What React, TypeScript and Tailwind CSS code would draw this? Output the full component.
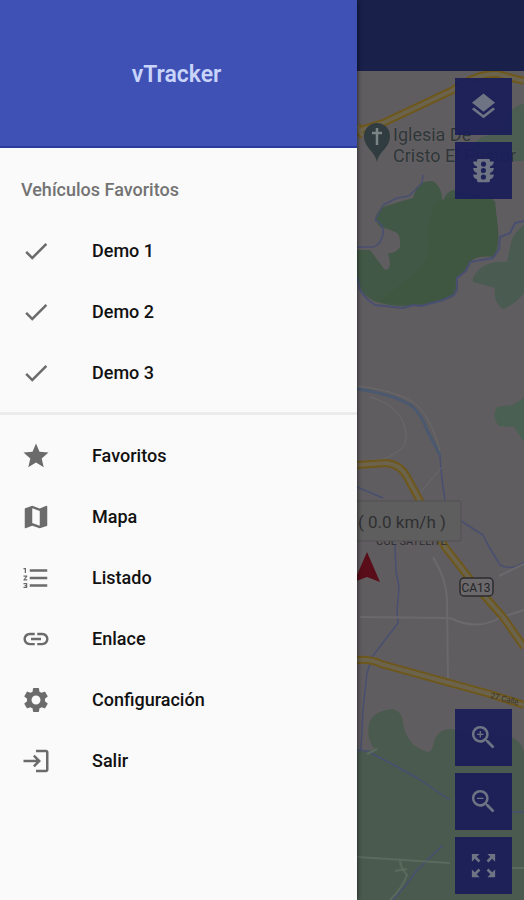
import type { IconType } from "react-icons";
import {
  MdCheck,
  MdFormatListNumbered,
  MdLayers,
  MdLink,
  MdLogin,
  MdMap,
  MdSettings,
  MdStar,
  MdTraffic,
  MdZoomIn,
  MdZoomOut,
  MdZoomOutMap,
} from "react-icons/md";

type Item = { label: string; icon: IconType };

const vehicles: Item[] = [
  { label: "Demo 1", icon: MdCheck },
  { label: "Demo 2", icon: MdCheck },
  { label: "Demo 3", icon: MdCheck },
];

const menu: Item[] = [
  { label: "Favoritos", icon: MdStar },
  { label: "Mapa", icon: MdMap },
  { label: "Listado", icon: MdFormatListNumbered },
  { label: "Enlace", icon: MdLink },
  { label: "Configuración", icon: MdSettings },
  { label: "Salir", icon: MdLogin },
];

const DrawerItem = ({ label, icon: Icon }: Item) => (
  <li>
    <a href="#" className="flex h-[61px] items-center gap-[41px] px-[21px] text-lg font-medium text-[#111111]">
      <Icon className="size-[30px] shrink-0 text-[#6b6b6b]" />
      <span>{label}</span>
    </a>
  </li>
);

const MapButton = ({ label, icon: Icon }: Item) => (
  <button
    type="button"
    aria-label={label}
    className="flex size-[57px] items-center justify-center bg-[#1a1f59]/95 text-[#6f7484]"
  >
    <Icon className="size-[31px]" />
  </button>
);

const Road = ({ d }: { d: string }) => (
  <>
    <path d={d} stroke="#6e571a" strokeWidth="8" />
    <path d={d} stroke="#6b634c" strokeWidth="4" />
  </>
);

const MapCanvas = () => (
  <svg
    viewBox="0 0 167 829"
    preserveAspectRatio="xMinYMin slice"
    className="absolute inset-0 h-full w-full bg-[#605d60]"
    fill="none"
    strokeLinejoin="round"
    fontFamily="Roboto, sans-serif"
  >
    {/* parks */}
    <path
      d="M18 149Q20 139 26 136L42 131L56 127Q60 112 68 111Q77 108 80 114Q86 120 85 131Q90 120 96 119L136 127L140 149L141 159Q143 178 136 186Q122 184 115 189Q110 200 100 207Q100 222 95 226Q80 234 60 234Q40 237 23 232Q8 228 3 216L0 205V179H13L28 199Q36 199 31 182Q38 183 43 176Q44 163 38 161Q30 157 23 156Z"
      fill="#425846"
    />
    <path d="M78 133Q100 120 138 130L141 160Q142 178 134 185Q116 184 110 194L98 207L94 226Q60 238 20 230Q45 214 62 200Q78 180 70 160Z" fill="#3f5640" />
    <path d="M167 33Q155 34 151 48Q146 62 125 66L112 76L130 90H167Z" fill="#4b5e51" />
    <path d="M167 154Q156 162 154 172L150 191Q135 190 125 196Q114 205 116 211L138 217Q136 232 146 238Q158 234 167 222Z" fill="#4a5c51" />
    <path d="M167 327L156 334L140 336Q134 345 142 355L157 356L167 371Z" fill="#496052" />
    <path
      d="M0 679H18Q9 668 12 654Q14 640 36 638Q46 641 46 652Q50 676 71 681Q76 680 77 670Q82 658 93 658L155 666Q165 672 167 680V829H0Z"
      fill="#4a5a4f"
    />

    {/* rivers */}
    <g stroke="#484f70" strokeWidth="1.5">
      <path d="M66 104L65 112L58 119L52 125L40 127L26 134L18 149Q27 152 26 163Q24 174 16 176L0 176" />
      <path d="M0 206L3 219L10 228L18 234L46 237L56 234L64 235L86 229L97 224L100 218V207L109 200L113 191L136 187L142 178L143 166L153 162L158 152L167 150" strokeWidth="2" />
      <path d="M0 318Q40 324 56 336Q65 345 70 359L83 384" stroke="#4a5870" strokeWidth="3" />
      <path d="M83 384Q84 405 88 429" />
      <path d="M0 416L26 427M104 450L126 464L131 474L143 494Q155 500 167 491" />
      <path d="M38 474L39 500L42 516L40 540L41 552L15 586L10 602L6 639L4 679" />
      <path d="M0 679L10 680L33 692L62 708L93 729M155 741H167" />
      <path d="M86 774L60 799L49 814L36 829" />
    </g>

    {/* streets */}
    <g stroke="#6b696c" strokeWidth="2">
      <path d="M0 315Q45 320 62 336Q76 352 83 380" strokeWidth="1" />
      <path d="M13 326Q42 334 48 357Q53 376 38 382Q28 390 16 389M63 422L85 396" strokeWidth="1" />
      <path d="M3 546L93 547Q120 560 142 547L167 539M142 505L167 493M76 486Q90 510 90 530L91 607" />
      <path d="M10 683L20 678M0 786L93 792M155 797H167M43 789Q43 796 50 804Q46 816 33 829M38 800L50 798" stroke="#5a6a5d" />
    </g>

    {/* highways */}
    <Road d="M0 54Q2 62 6 64M0 60L26 52L96 19Q120 2 140 3L167 10" />
    <Road d="M0 394L30 392Q44 394 50 406L88 476L116 512L146 546L167 576" />
    <Road d="M0 589Q14 588 24 593L93 612L133 623L167 634" />

    {/* church */}
    <path d="M20 91C18 80 7 77 7 65A13 13 0 0 1 33 65C33 77 22 80 20 91Z" fill="#303c3f" />
    <path d="M20 57V74M15 62H25" stroke="#7b8586" strokeWidth="2.5" />
    <g fill="#2f3638" stroke="#676568" strokeWidth="1" paintOrder="stroke" fontSize="18">
      <text x="36" y="70">Iglesia De</text>
      <text x="36" y="91">Cristo El Pastor</text>
    </g>

    <text x="19" y="474" fontSize="11" fill="#2c2c30">COL SATELITE</text>
    <rect x="103" y="507" width="33" height="18" rx="4" fill="#6b696c" stroke="#2b2b2d" strokeWidth="1.5" />
    <text x="119" y="521" fontSize="12" textAnchor="middle" fill="#252527">CA13</text>
    <text x="133" y="627" fontSize="8" fill="#39332a" transform="rotate(14 133 627)">27 Calle</text>

    {/* vehicle marker and its speed */}
    <path d="M10 481L23 511L10 506L-3 511Z" fill="#590d18" />
    <rect x="-60" y="430" width="164" height="40" rx="2" fill="#5e5e5e" stroke="#525153" />
    <text x="1" y="457" fontSize="17" fill="#303032">( 0.0 km/h )</text>
  </svg>
);

const App = () => {
  return (
    <div className="flex min-h-screen bg-[#605d60] font-[Roboto,sans-serif]">
      <aside className="z-10 w-[357px] max-w-[80%] shrink-0 bg-[#fafafa] shadow-[0_0_5px_rgba(0,0,0,0.7)]">
        <header className="flex h-[148px] items-center justify-center border-b-2 border-[#2a3c9e] bg-[#3f51b5] px-4 pt-1">
          <h1 className="pr-1 text-[23px] font-semibold text-[#c8d4fa]">vTracker</h1>
        </header>

        <nav>
          <h2 className="px-[21px] pt-7 pb-4 text-lg font-medium text-[#737373]">Vehículos Favoritos</h2>
          <ul>
            {vehicles.map((item) => (
              <DrawerItem key={item.label} {...item} />
            ))}
          </ul>
          <ul className="mt-[9px] border-t-3 border-[#ebebeb] pt-[10px]">
            {menu.map((item) => (
              <DrawerItem key={item.label} {...item} />
            ))}
          </ul>
        </nav>
      </aside>

      <div className="flex min-w-0 flex-1 flex-col">
        <div className="h-[71px] shrink-0 bg-[#19204a]" />
        <main className="relative flex flex-1 flex-col overflow-hidden">
          <MapCanvas />
          <div className="relative flex flex-1 flex-col items-end justify-between pt-[7px] pr-3 pb-[6px]">
            <div className="flex flex-col gap-[7px]">
              <MapButton label="Capas" icon={MdLayers} />
              <MapButton label="Tráfico" icon={MdTraffic} />
            </div>
            <div className="flex flex-col gap-[7px]">
              <MapButton label="Acercar" icon={MdZoomIn} />
              <MapButton label="Alejar" icon={MdZoomOut} />
              <MapButton label="Ver todo" icon={MdZoomOutMap} />
            </div>
          </div>
        </main>
      </div>
    </div>
  );
};

export default App;
